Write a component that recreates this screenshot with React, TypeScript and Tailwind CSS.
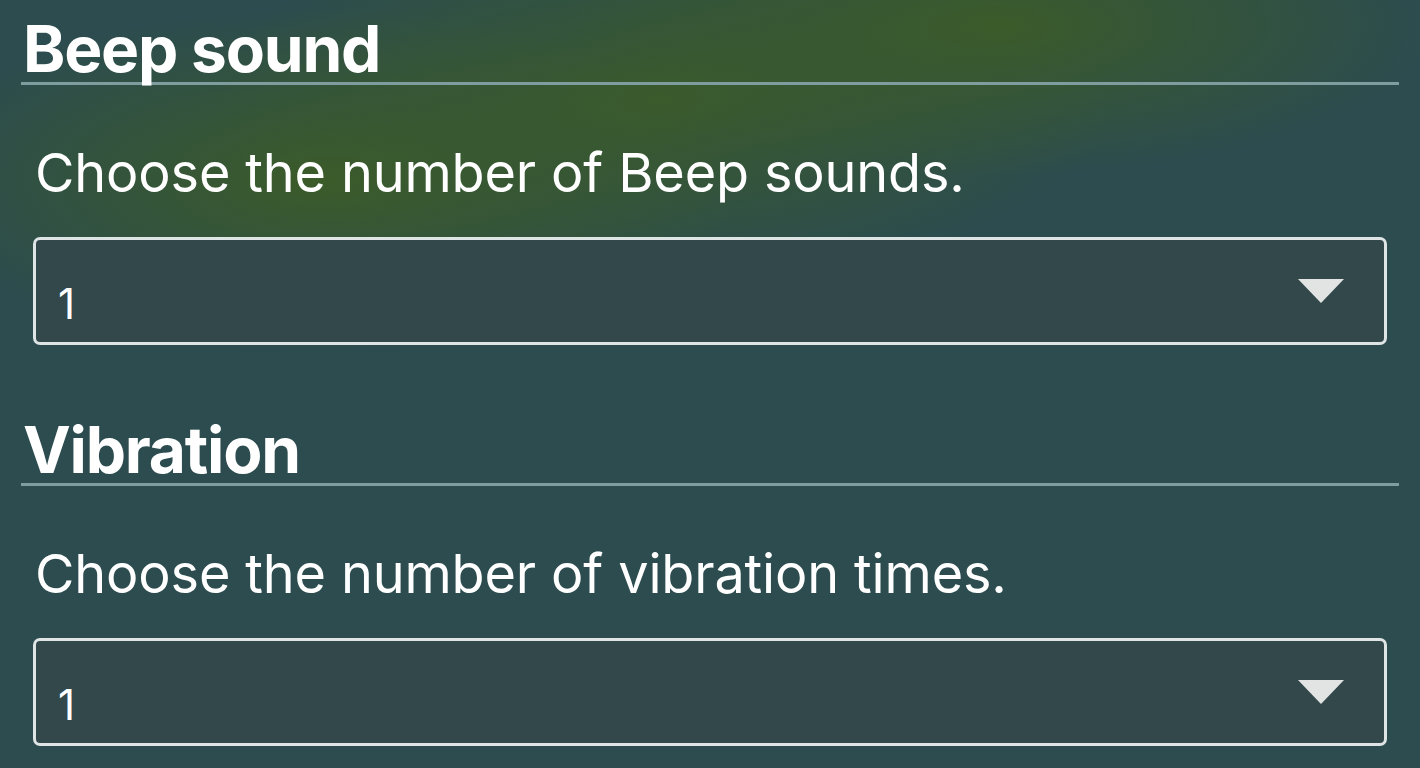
import React from 'react';

type Section = { title: string; hint: string; value: string };

const sections: Section[] = [
  { title: 'Beep sound', hint: 'Choose the number of Beep sounds.', value: '1' },
  { title: 'Vibration', hint: 'Choose the number of vibration times.', value: '1' },
];

const SelectBox: React.FC<{ value: string }> = ({ value }) => (
  <div className="ml-[33px] w-[1354px] h-[108px] rounded-[7px] border-[3px] border-[#dfe4e4] bg-[#33484b] flex items-center justify-between pl-[22px] pr-[40px]">
    <span className="text-[42px] leading-none text-white pt-[26px]">{value}</span>
    <svg width="46" height="24" viewBox="0 0 46 24">
      <path d="M0 0 L46 0 L23 24 Z" fill="#e2e4e4" />
    </svg>
  </div>
);

const App: React.FC = () => {
  return (
    <div
      className="w-[1420px] h-[768px] overflow-hidden bg-[#2c4c4f] bg-[radial-gradient(ellipse_420px_170px_at_320px_180px,rgba(60,92,40,0.95),transparent),radial-gradient(ellipse_450px_180px_at_660px_100px,rgba(60,92,40,0.9),transparent),radial-gradient(ellipse_430px_150px_at_1000px_25px,rgba(60,92,40,0.95),transparent)] font-['Inter','Liberation_Sans',sans-serif] text-white"
    >
      {sections.map((s) => (
        <div key={s.title} className="h-[401px] flex flex-col">
          <div className="ml-[21px] w-[1378px] h-[85px] border-b-[3px] border-[#7f9d9e] flex items-end pl-[2px]">
            <h2 className="text-[64px] font-bold leading-none pb-[1px] tracking-[-1.2px]">{s.title}</h2>
          </div>
          <p className="ml-[35px] mt-[61px] text-[54px] leading-none tracking-[-0.15px]">{s.hint}</p>
          <div className="mt-[37px]">
            <SelectBox value={s.value} />
          </div>
        </div>
      ))}
    </div>
  );
};

export default App;
